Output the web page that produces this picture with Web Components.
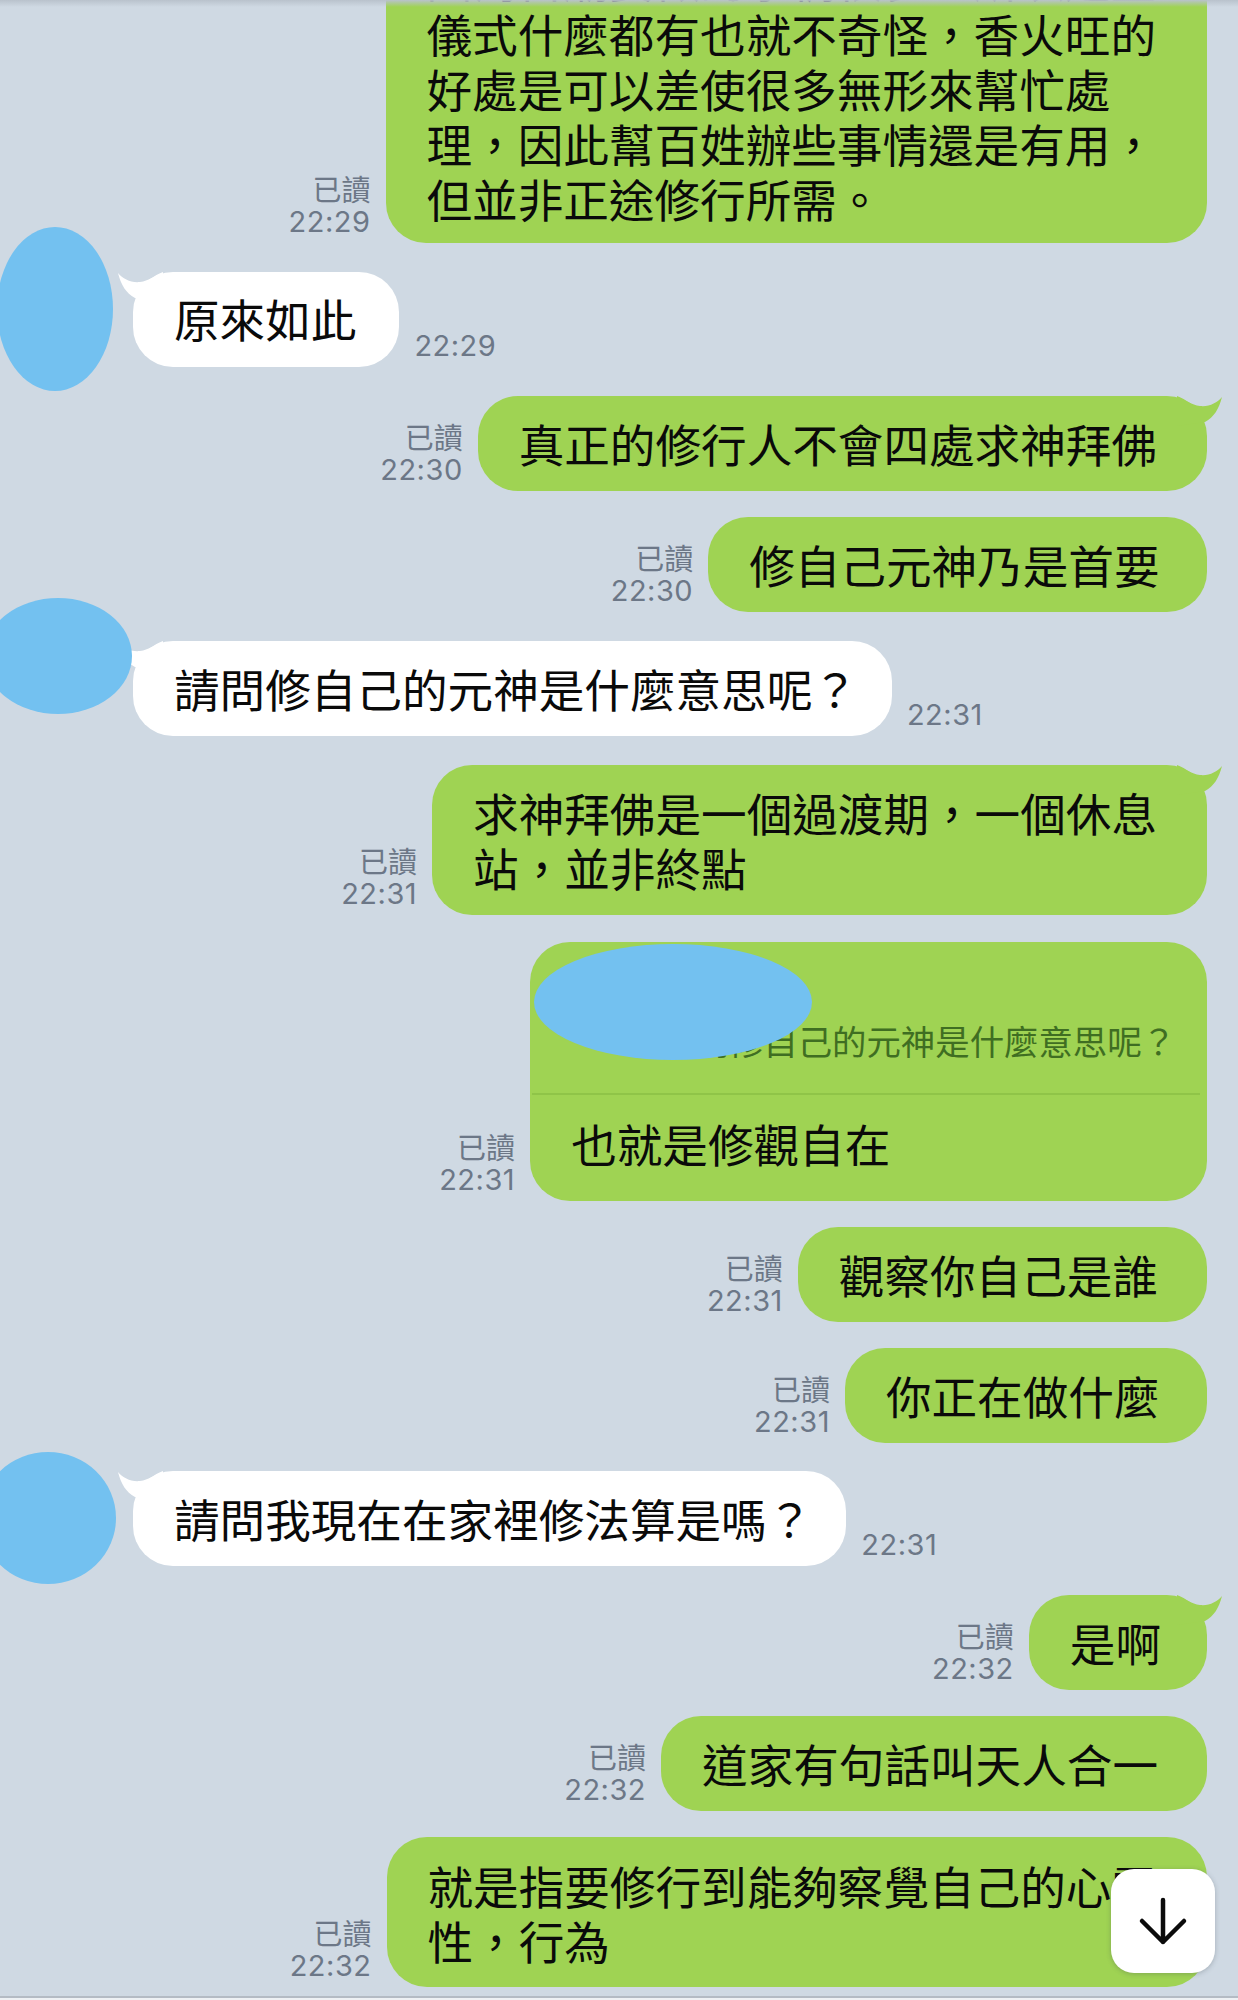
<!DOCTYPE html>
<html lang="zh-Hant">
<head>
<meta charset="utf-8">
<title>Chat</title>
<style>
  html, body { margin: 0; height: 2000px; overflow: hidden; background: #cfd9e3; }
  body { font-family: "Noto Sans CJK TC", "Liberation Sans", sans-serif; position: relative; }
</style>
</head>
<body>
<chat-screen>
  <chat-message side="me" read time="22:29" gap="-72" pr="51" pt="22.5" pb="17.5">因為宮廟要做的事情很多，所以這些<br>儀式什麼都有也就不奇怪，香火旺的<br>好處是可以差使很多無形來幫忙處<br>理，因此幫百姓辦些事情還是有用，<br>但並非正途修行所需。</chat-message>
  <chat-message side="them" tail time="22:29" gap="29" pr="43" pt="19" pb="21">原來如此</chat-message>
  <chat-message side="me" tail read time="22:30" gap="29">真正的修行人不會四處求神拜佛</chat-message>
  <chat-message side="me" read time="22:30" gap="26" pr="47.5">修自己元神乃是首要</chat-message>
  <chat-message side="them" tail time="22:31" gap="29" pr="34">請問修自己的元神是什麼意思呢？</chat-message>
  <chat-message side="me" tail read time="22:31" gap="29">求神拜佛是一個過渡期，一個休息<br>站，並非終點</chat-message>
  <chat-message side="me" read time="22:31" gap="27" quote="請問修自己的元神是什麼意思呢？">也就是修觀自在</chat-message>
  <chat-message side="me" read time="22:31" gap="26" pr="49">觀察你自己是誰</chat-message>
  <chat-message side="me" read time="22:31" gap="26" pr="47.5">你正在做什麼</chat-message>
  <chat-message side="them" tail time="22:31" gap="28" pr="34">請問我現在在家裡修法算是嗎？</chat-message>
  <chat-message side="me" tail read time="22:32" gap="29" pr="46">是啊</chat-message>
  <chat-message side="me" read time="22:32" gap="26" pr="49">道家有句話叫天人合一</chat-message>
  <chat-message side="me" read time="22:32" gap="26" pt="21" pb="19">就是指要修行到能夠察覺自己的心靈<br>性，行為</chat-message>

  <redact-blob slot="overlay" cx="55" cy="309" rx="58" ry="82"></redact-blob>
  <redact-blob slot="overlay" cx="58" cy="656" rx="74" ry="58"></redact-blob>
  <redact-blob slot="overlay" cx="48" cy="1518" rx="68" ry="66"></redact-blob>
  <redact-blob slot="overlay" cx="673" cy="1002" rx="139" ry="58"></redact-blob>
  <scroll-button slot="overlay"></scroll-button>
</chat-screen>

<script>
  class ChatScreen extends HTMLElement {
    constructor() {
      super();
      this.attachShadow({ mode: 'open' }).innerHTML = `
        <style>
          :host { display: block; position: relative; width: 1238px; height: 2000px; overflow: hidden; background: #cfd9e3; }
          .thread { display: flex; flex-direction: column; padding: 0 31px 0 133px; }
          .shade { position: absolute; left: 0; right: 0; top: 0; height: 7px; background: linear-gradient(#b9c2cc, rgba(207,217,227,0)); }
          .rule { position: absolute; left: 0; right: 0; bottom: 2px; height: 2px; background: #b4bbc4; }
          .under { position: absolute; left: 0; right: 0; bottom: 0; height: 2px; background: #eef1f4; }
        </style>
        <div class="thread"><slot></slot></div>
        <div class="shade"></div>
        <div class="rule"></div><div class="under"></div>
        <slot name="overlay"></slot>`;
    }
  }

  class ChatMessage extends HTMLElement {
    constructor() {
      super();
      const side = this.getAttribute('side') || 'me';
      const me = side === 'me';
      const tail = this.hasAttribute('tail');
      const read = this.hasAttribute('read');
      const quote = this.getAttribute('quote');
      const time = this.getAttribute('time') || '';
      const pr = this.getAttribute('pr') || 50;
      const pt = this.getAttribute('pt') || 20;
      const pb = this.getAttribute('pb') || 20;
      const color = me ? '#9fd353' : '#ffffff';
      this.attachShadow({ mode: 'open' }).innerHTML = `
        <style>
          :host { display: flex; flex-direction: ${me ? 'row-reverse' : 'row'}; align-items: flex-end; gap: 15px; margin-top: ${this.getAttribute('gap') || 0}px; }
          .bubble { position: relative; background: ${color}; border-radius: 40px; color: #0a0a0a; font-size: 45.6px; line-height: 55px; white-space: nowrap; }
          .text { padding: ${pt}px ${pr}px ${pb}px 41px; }
          .tail { position: absolute; top: 0; ${me ? 'right: -20px; transform: scaleX(-1);' : 'left: -20px;'} width: 56px; height: 32px; display: block; }
          .meta { display: flex; flex-direction: column; align-items: flex-end; margin-bottom: 4px; color: #6c7787; line-height: 34px; }
          .read { font-size: 29px; font-weight: 400; }
          .time { font-family: Inter, "Liberation Sans", sans-serif; font-size: 29px; letter-spacing: .5px; font-weight: 400; }
          .quote { display: flex; gap: 11px; padding: 78px 24px 33px 44px; border-bottom: 2px solid #8fc448; margin: 0 7px 0 2px; }
          .thumb { width: 73px; flex: none; }
          .q { font-size: 34.4px; line-height: 40px; color: #3f6e22; font-weight: 400; }
          .quote + .text { padding-top: 21px; padding-bottom: 30px; }
        </style>
        <div class="bubble">
          ${tail ? `<svg class="tail" viewBox="0 0 56 32" aria-hidden="true"><path fill="${color}" d="M5 1C10 7 18 11 27 10C36 9 40 4 50 0L50 30L22 26C13 21 8 13 5 1Z"/></svg>` : ''}
          ${quote ? `<div class="quote"><span class="thumb"></span><span class="q">${quote}</span></div>` : ''}
          <div class="text"><slot></slot></div>
        </div>
        <div class="meta">
          ${read ? '<span class="read">已讀</span>' : ''}
          <span class="time">${time}</span>
        </div>`;
    }
  }

  class RedactBlob extends HTMLElement {
    constructor() {
      super();
      const n = k => Number(this.getAttribute(k));
      this.attachShadow({ mode: 'open' }).innerHTML = `
        <style>
          :host { display: block; position: absolute; z-index: 2; left: ${n('cx') - n('rx')}px; top: ${n('cy') - n('ry')}px; width: ${2 * n('rx')}px; height: ${2 * n('ry')}px; border-radius: 50%; background: #73c1f0; }
        </style>`;
    }
  }

  class ScrollButton extends HTMLElement {
    constructor() {
      super();
      this.attachShadow({ mode: 'open' }).innerHTML = `
        <style>
          :host { display: flex; position: absolute; z-index: 3; left: 1111px; top: 1869px; width: 104px; height: 104px; align-items: center; justify-content: center; background: #fff; border-radius: 23px; box-shadow: 0 1px 5px rgba(60,70,80,.3); }
          svg { display: block; width: 104px; height: 104px; }
        </style>
        <svg viewBox="0 0 104 104" aria-hidden="true"><path d="M52 31V73M31 52L52 73L73 52" fill="none" stroke="#0b0b0b" stroke-width="4.5" stroke-linecap="round" stroke-linejoin="round"/></svg>`;
    }
  }

  customElements.define('chat-screen', ChatScreen);
  customElements.define('chat-message', ChatMessage);
  customElements.define('redact-blob', RedactBlob);
  customElements.define('scroll-button', ScrollButton);
</script>
</body>
</html>
